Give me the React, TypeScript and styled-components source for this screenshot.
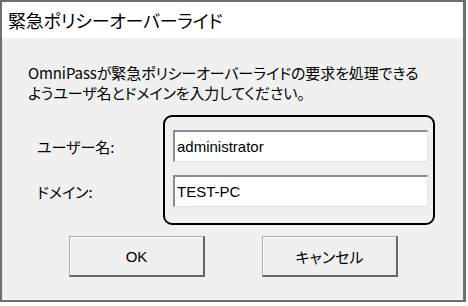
import React from 'react';
import styled, { createGlobalStyle } from 'styled-components';

const GlobalStyle = createGlobalStyle`
    html, body {
        margin: 0;
        padding: 0;
        background: #ffffff;
    }
    body {
        font-family: "Noto Sans CJK JP", "Liberation Sans", sans-serif;
        font-feature-settings: "palt";
        color: #000000;
    }
`;

const Window = styled.div`
    width: 466px;
    height: 302px;
    box-sizing: border-box;
    border: 2px solid #6e6e6e;
    border-right-width: 3px;
    display: flex;
    flex-direction: column;
    background: #f0f0f0;
`;

const TitleBar = styled.div`
    height: 36px;
    flex-shrink: 0;
    background: #ffffff;
    display: flex;
    align-items: center;
    padding-left: 6px;
    font-size: 18px;
    letter-spacing: -0.2px;
`;

const Body = styled.div`
    flex: 1;
    display: flex;
    flex-direction: column;
    padding: 25px 0 0 25px;
    border-left: 1px solid #e4e4e4;
    border-right: 1px solid #fafafa;
    border-bottom: 1px solid #fafafa;
`;

const Message = styled.p`
    margin: 0;
    font-size: 15px;
    line-height: 20px;
    letter-spacing: -0.1px;
`;

const FormArea = styled.div`
    display: flex;
    margin-top: 12px;
`;

const LabelColumn = styled.div`
    width: 135px;
    padding-left: 9px;
    box-sizing: border-box;
    display: flex;
    flex-direction: column;
    padding-top: 15px;
    gap: 13px;
`;

const Label = styled.div`
    height: 32px;
    display: flex;
    align-items: center;
    font-size: 15px;
`;

const FieldBox = styled.div`
    width: 272px;
    height: 110px;
    box-sizing: border-box;
    border: 2px solid #000000;
    border-radius: 9px;
    padding: 13px 5px 0 8px;
    display: flex;
    flex-direction: column;
    gap: 13px;
`;

const Field = styled.div`
    height: 32px;
    box-sizing: border-box;
    background: #ffffff;
    border-top: 2px solid #8c8c8c;
    border-left: 2px solid #8c8c8c;
    border-right: 1px solid #e3e3e3;
    border-bottom: 1px solid #e3e3e3;
    display: flex;
    align-items: center;
    padding-left: 2px;
    font-family: "Liberation Sans", sans-serif;
    font-size: 15px;
`;

const ButtonRow = styled.div`
    display: flex;
    gap: 57px;
    margin-top: 11px;
    padding-left: 41px;
`;

const Button = styled.div`
    width: 136px;
    height: 41px;
    box-sizing: border-box;
    background: #efefef;
    border: 1px solid #acacac;
    border-right: 2px solid #676767;
    border-bottom: 2px solid #676767;
    box-shadow: inset 1px 1px 0 #ffffff;
    display: flex;
    align-items: center;
    justify-content: center;
    font-size: 15px;
`;

const ButtonLabel = styled.span<{ $latin?: boolean }>`
    font-family: ${p => (p.$latin ? '"Liberation Sans", sans-serif' : '"Noto Sans CJK JP", sans-serif')};
`;

const App: React.FC = () => {
    return (
        <>
            <GlobalStyle />
            <Window>
                <TitleBar>緊急ポリシーオーバーライド</TitleBar>
                <Body>
                    <Message>
                        OmniPassが緊急ポリシーオーバーライドの要求を処理できる
                        <br />
                        ようユーザ名とドメインを入力してください。
                    </Message>
                    <FormArea>
                        <LabelColumn>
                            <Label>ユーザー名:</Label>
                            <Label>ドメイン:</Label>
                        </LabelColumn>
                        <FieldBox>
                            <Field>administrator</Field>
                            <Field>TEST-PC</Field>
                        </FieldBox>
                    </FormArea>
                    <ButtonRow>
                        <Button><ButtonLabel $latin>OK</ButtonLabel></Button>
                        <Button><ButtonLabel>キャンセル</ButtonLabel></Button>
                    </ButtonRow>
                </Body>
            </Window>
        </>
    );
};

export default App;
